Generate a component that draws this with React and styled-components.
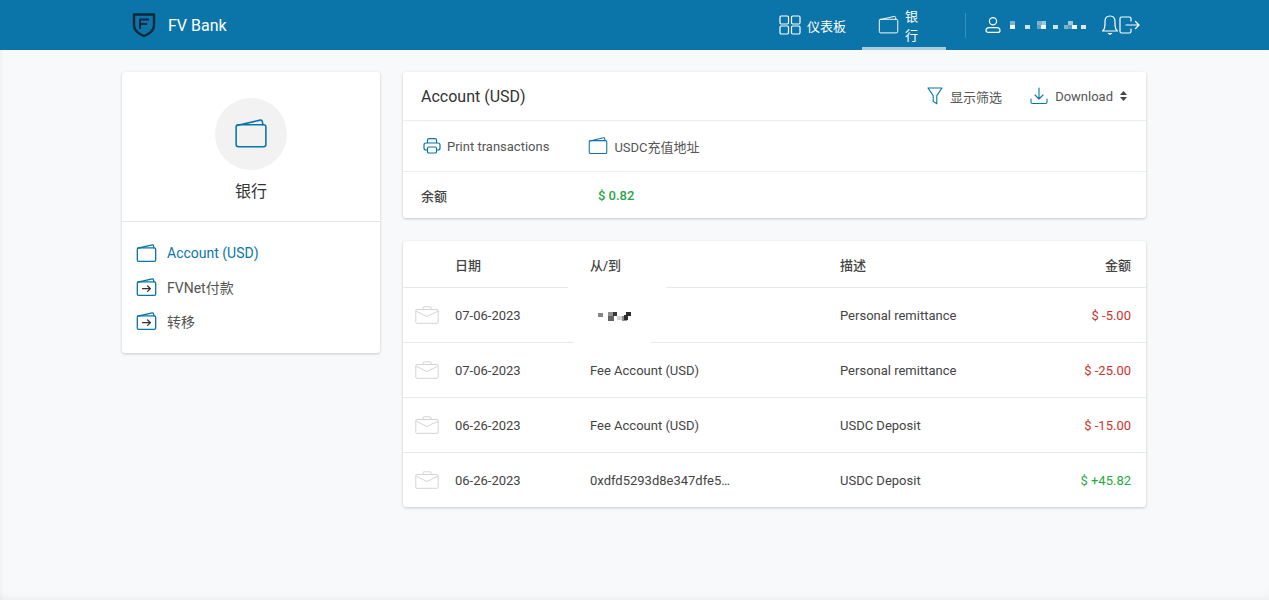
import React from "react";
import styled, { createGlobalStyle } from "styled-components";

const GlobalStyle = createGlobalStyle`
  html, body {
    margin: 0;
    padding: 0;
    height: 100%;
    background: #f8f9fa;
    font-family: Roboto, "Noto Sans CJK SC", sans-serif;
    color: #444;
  }
  * { box-sizing: border-box; }
`;

// icons
const WalletIcon = ({ size = 24, color = "#0b75a9", width = 1.4 }) => (
  <svg width={size} height={size} viewBox="0 0 24 24" fill="none" stroke={color} strokeWidth={width} strokeLinejoin="round" strokeLinecap="round">
    <rect x="1.5" y="5.5" width="21" height="15.5" rx="1.6" />
    <path d="M2 6 L18.5 2.2 Q19.8 2 20 3.2 L20.4 5.5" />
  </svg>
);

const WalletArrowIcon = ({ size = 21 }) => (
  <svg width={size} height={size} viewBox="0 0 24 24" fill="none" stroke="#0b75a9" strokeWidth="1.5" strokeLinejoin="round" strokeLinecap="round">
    <rect x="1.5" y="5.5" width="21" height="15.5" rx="1.6" />
    <path d="M2 6 L18.5 2.2 Q19.8 2 20 3.2 L20.4 5.5" />
    <path d="M7.5 13.3 H16.5 M13.3 10.2 L16.5 13.3 L13.3 16.4" stroke="#333" />
  </svg>
);

const LogoIcon = () => (
  <svg width="26" height="26" viewBox="0 0 26 26" fill="none" stroke="#10263a" strokeWidth="2.4" strokeLinejoin="round">
    <path d="M3 2.5 H23 V13 Q23 20 13 24 Q3 20 3 13 Z" />
    <path d="M9 17 V7.5 H18 M9 12 H16" strokeWidth="2" />
  </svg>
);

const DashboardIcon = () => (
  <svg width="22" height="20" viewBox="0 0 22 20" fill="none" stroke="#fff" strokeWidth="1.2">
    <rect x="1" y="1" width="8.5" height="8" rx="1.2" />
    <rect x="12.5" y="1" width="8.5" height="8" rx="1.2" />
    <rect x="1" y="11" width="8.5" height="8" rx="1.2" />
    <rect x="12.5" y="11" width="8.5" height="8" rx="1.2" />
  </svg>
);

const UserIcon = () => (
  <svg width="18" height="18" viewBox="0 0 18 18" fill="none" stroke="#fff" strokeWidth="1.2">
    <circle cx="9" cy="5.2" r="3.6" />
    <path d="M2 14.4 Q2 11.6 5.5 11.6 H12.5 Q16 11.6 16 14.4 Q16 16.4 13.5 16.4 H4.5 Q2 16.4 2 14.4 Z" />
  </svg>
);

const BellIcon = () => (
  <svg width="18" height="22" viewBox="0 0 18 22" fill="none" stroke="#fff" strokeWidth="1.2" strokeLinejoin="round">
    <path d="M1.5 17 Q4 15 4 10 V7.5 Q4 2 9 2 Q14 2 14 7.5 V10 Q14 15 16.5 17 Z" />
    <path d="M7 19 Q9 21.5 11 19" fill="#fff" />
  </svg>
);

const LogoutIcon = () => (
  <svg width="21" height="18" viewBox="0 0 21 18" fill="none" stroke="#fff" strokeWidth="1.2" strokeLinecap="round" strokeLinejoin="round">
    <path d="M12 5 V2.5 Q12 1 10.5 1 H2.5 Q1 1 1 2.5 V15.5 Q1 17 2.5 17 H10.5 Q12 17 12 15.5 V13" />
    <path d="M7 9 H20 M16.5 5.5 L20 9 L16.5 12.5" />
  </svg>
);

const PrinterIcon = () => (
  <svg width="18" height="18" viewBox="0 0 18 18" fill="none" stroke="#0b75a9" strokeWidth="1.2" strokeLinejoin="round">
    <path d="M4.5 6 V3 Q4.5 1.6 6 1.6 H12 Q13.5 1.6 13.5 3 V6" />
    <path d="M4.5 13 H3 Q1 13 1 11 V8 Q1 6 3 6 H15 Q17 6 17 8 V11 Q17 13 15 13 H13.5" />
    <rect x="4.5" y="10" width="9" height="6" rx="1.2" />
  </svg>
);

const FilterIcon = () => (
  <svg width="16" height="18" viewBox="0 0 16 18" fill="none" stroke="#0b75a9" strokeWidth="1.1" strokeLinejoin="round">
    <path d="M1 1 H15 L9.8 8.6 V16.8 L6.2 14.4 V8.6 Z" />
  </svg>
);

const DownloadIcon = () => (
  <svg width="18" height="18" viewBox="0 0 18 18" fill="none" stroke="#0b75a9" strokeWidth="1.1" strokeLinecap="round" strokeLinejoin="round">
    <path d="M9 1 V12 M5 8 L9 12 L13 8" />
    <path d="M1 12 V15 Q1 16.5 2.5 16.5 H15.5 Q17 16.5 17 15 V12" />
  </svg>
);

const SortIcon = () => (
  <svg width="7" height="10" viewBox="0 0 7 10" fill="#444">
    <path d="M3.5 0 L7 4 H0 Z M3.5 10 L0 6 H7 Z" />
  </svg>
);

const CaseIcon = () => (
  <svg width="24" height="18" viewBox="0 0 24 18" fill="none" stroke="#d4d4d4" strokeWidth="1">
    <rect x="0.8" y="3.5" width="22.4" height="13.8" rx="1" />
    <path d="M0.8 5 L12 10.5 L23.2 5 M8 3.5 V1.6 Q8 0.8 9 0.8 H15 Q16 0.8 16 1.6 V3.5" />
  </svg>
);

// pixelated patch of hidden text
const Pixels = ({ cells, w, h, color }) => (
  <svg width={w} height={h} viewBox={`0 0 ${w} ${h}`}>
    {cells.map(([x, y, cw, ch, o], i) => (
      <rect key={i} x={x} y={y} width={cw} height={ch} fill={color} opacity={o} />
    ))}
  </svg>
);

const headerPixels = [
  [0, 1, 5, 4, 0.45], [0, 5, 5, 4, 0.95], [15, 5, 5, 4, 0.8], [27, 1, 5, 4, 0.45], [32, 1, 4, 4, 0.6],
  [27, 5, 4, 4, 0.35], [31, 5, 5, 4, 0.95], [43, 5, 5, 4, 0.8], [54, 5, 4, 4, 0.45], [58, 1, 5, 4, 0.6],
  [62, 5, 5, 4, 0.95], [71, 5, 5, 4, 0.85], [58, 5, 4, 4, 0.3],
];

const rowPixels = [
  [0, 2, 5, 4, 0.55], [10, 1, 5, 4, 0.5], [15, 1, 4, 4, 0.9], [10, 5, 6, 5, 0.7], [19, 5, 5, 4, 0.2],
  [24, 5, 5, 5, 0.5], [28, 1, 5, 4, 0.95], [26, 4, 4, 5, 0.9],
];

const menuItems = [
  { label: "Account (USD)", active: true, icon: <WalletIcon size={21} width={1.5} /> },
  { label: "FVNet付款", icon: <WalletArrowIcon /> },
  { label: "转移", icon: <WalletArrowIcon /> },
];

const rows = [
  { date: "07-06-2023", party: null, desc: "Personal remittance", amount: "$ -5.00", plus: false },
  { date: "07-06-2023", party: "Fee Account (USD)", desc: "Personal remittance", amount: "$ -25.00", plus: false },
  { date: "06-26-2023", party: "Fee Account (USD)", desc: "USDC Deposit", amount: "$ -15.00", plus: false },
  { date: "06-26-2023", party: "0xdfd5293d8e347dfe5…", desc: "USDC Deposit", amount: "$ +45.82", plus: true },
];

export default function App() {
  return (
    <>
      <GlobalStyle />
      <Page>
        <TopBar>
          <Brand>
            <LogoIcon />
            <BrandName>FV Bank</BrandName>
          </Brand>
          <NavGroup>
            <NavItem>
              <DashboardIcon />
              <span>仪表板</span>
            </NavItem>
            <NavItem $active>
              <WalletIcon size={22} color="#fff" width={1.1} />
              <span>银行</span>
            </NavItem>
            <NavDivider />
            <UserBlock>
              <UserIcon />
              <Pixels cells={headerPixels} w={77} h={10} color="#fff" />
            </UserBlock>
            <BellIcon />
            <LogoutIcon />
          </NavGroup>
        </TopBar>

        <Content>
          <SideCard>
            <SideHead>
              <IconCircle>
                <WalletIcon size={34} width={1.1} />
              </IconCircle>
              <SideTitle>银行</SideTitle>
            </SideHead>
            <SideMenu>
              {menuItems.map((item) => (
                <MenuRow key={item.label} $active={item.active}>
                  {item.icon}
                  <span>{item.label}</span>
                </MenuRow>
              ))}
            </SideMenu>
          </SideCard>

          <MainCol>
            <Card>
              <TitleRow>
                <CardTitle>Account (USD)</CardTitle>
                <TitleActions>
                  <ActionItem>
                    <FilterIcon />
                    <span>显示筛选</span>
                  </ActionItem>
                  <ActionItem>
                    <DownloadIcon />
                    <span>Download</span>
                    <SortIcon />
                  </ActionItem>
                </TitleActions>
              </TitleRow>
              <ToolRow>
                <ToolItem>
                  <PrinterIcon />
                  <span>Print transactions</span>
                </ToolItem>
                <ToolItem>
                  <WalletIcon size={20} width={1.3} />
                  <span>USDC充值地址</span>
                </ToolItem>
              </ToolRow>
              <BalanceRow>
                <BalanceLabel>余额</BalanceLabel>
                <BalanceValue>$ 0.82</BalanceValue>
              </BalanceRow>
            </Card>

            <TableCard>
              <HeadRow>
                <span />
                <HeadCell>日期</HeadCell>
                <HeadCell>从/到</HeadCell>
                <HeadCell>描述</HeadCell>
                <HeadCell $right>金额</HeadCell>
              </HeadRow>
              {rows.map((row, i) => (
                <BodyRow key={i}>
                  <CaseIcon />
                  <span>{row.date}</span>
                  {row.party ? (
                    <span>{row.party}</span>
                  ) : (
                    <RedactedCell>
                      <Pixels cells={rowPixels} w={33} h={10} color="#222" />
                    </RedactedCell>
                  )}
                  <span>{row.desc}</span>
                  <Amount $plus={row.plus}>{row.amount}</Amount>
                </BodyRow>
              ))}
            </TableCard>
          </MainCol>
        </Content>
      </Page>
    </>
  );
}

const Page = styled.div`
  width: 100%;
  height: 600px;
  overflow: hidden;
  background: #f8f9fa;
  box-shadow: inset 0 -6px 8px -4px rgba(0, 0, 0, 0.05), inset 4px 0 5px -3px rgba(0, 0, 0, 0.04);
`;

const TopBar = styled.header`
  height: 50px;
  background: #0b75a9;
  display: flex;
  align-items: center;
  justify-content: space-between;
  padding: 0 129px 0 131px;
`;

const Brand = styled.div`
  display: flex;
  align-items: center;
  gap: 11px;
`;

const BrandName = styled.span`
  color: #fff;
  font-size: 16px;
`;

const NavGroup = styled.nav`
  height: 100%;
  display: flex;
  align-items: center;
`;

const NavItem = styled.div`
  height: 100%;
  display: flex;
  align-items: center;
  gap: 6px;
  color: #fff;
  font-size: 13px;
  padding: 0 16px 0 16px;
  border-bottom: 3px solid ${(p) => (p.$active ? "#a9cde0" : "transparent")};
  padding-top: 3px;
  width: ${(p) => (p.$active ? "84px" : "auto")};
`;

const NavDivider = styled.div`
  width: 1px;
  height: 25px;
  background: rgba(255, 255, 255, 0.2);
  margin: 0 18px 0 19px;
`;

const UserBlock = styled.div`
  display: flex;
  align-items: center;
  gap: 8px;
  margin-right: 14px;
`;

const Content = styled.main`
  display: flex;
  align-items: flex-start;
  gap: 23px;
  width: 1024px;
  margin: 22px 0 0 122px;
`;

const Card = styled.section`
  background: #fff;
  border-radius: 3px;
  box-shadow: 0 1px 3px rgba(0, 0, 0, 0.2);
`;

const SideCard = styled(Card)`
  width: 258px;
  flex-shrink: 0;
  height: 281px;
`;

const SideHead = styled.div`
  height: 150px;
  display: flex;
  flex-direction: column;
  align-items: center;
  padding-top: 26px;
  border-bottom: 1px solid #e3e5e8;
`;

const IconCircle = styled.div`
  width: 72px;
  height: 72px;
  border-radius: 50%;
  background: #f2f2f2;
  display: flex;
  align-items: center;
  justify-content: center;
`;

const SideTitle = styled.div`
  margin-top: 11px;
  font-size: 16px;
  line-height: 22px;
  color: #333;
`;

const SideMenu = styled.div`
  display: flex;
  flex-direction: column;
  gap: 10px;
  padding: 19px 0 0 14px;
`;

const MenuRow = styled.div`
  display: flex;
  align-items: center;
  gap: 10px;
  height: 24px;
  font-size: 14px;
  color: ${(p) => (p.$active ? "#0b75a9" : "#555")};
`;

const MainCol = styled.div`
  width: 743px;
  display: flex;
  flex-direction: column;
  gap: 23px;
`;

const TitleRow = styled.div`
  height: 49px;
  display: flex;
  align-items: center;
  justify-content: space-between;
  padding: 0 19px 0 18px;
  border-bottom: 1px solid #ebedef;
`;

const CardTitle = styled.h2`
  margin: 0;
  font-size: 16px;
  font-weight: 400;
  color: #333;
`;

const TitleActions = styled.div`
  display: flex;
  align-items: center;
  gap: 28px;
`;

const ActionItem = styled.div`
  display: flex;
  align-items: center;
  gap: 7px;
  font-size: 13px;
  color: #555;
`;

const ToolRow = styled.div`
  height: 51px;
  display: flex;
  align-items: center;
  gap: 39px;
  padding-left: 20px;
  border-bottom: 1px solid #ebedef;
`;

const ToolItem = styled.div`
  display: flex;
  align-items: center;
  gap: 6px;
  font-size: 13px;
  color: #555;
`;

const BalanceRow = styled.div`
  height: 46px;
  display: flex;
  align-items: center;
  padding-left: 18px;
  font-size: 13px;
`;

const BalanceLabel = styled.div`
  width: 177px;
  font-weight: 500;
  color: #444;
`;

const BalanceValue = styled.div`
  font-weight: 500;
  color: #28a745;
`;

const TableCard = styled(Card)`
  font-size: 13px;
  color: #444;
`;

const tableCols = "52px 135px 250px 1fr 120px";

const HeadRow = styled.div`
  height: 47px;
  display: grid;
  grid-template-columns: ${tableCols};
  align-items: center;
  padding-right: 15px;
  border-bottom: 1px solid #e6e8ea;
`;

const HeadCell = styled.div`
  font-weight: 500;
  color: #444;
  text-align: ${(p) => (p.$right ? "right" : "left")};
`;

const BodyRow = styled.div`
  height: 55px;
  display: grid;
  grid-template-columns: ${tableCols};
  align-items: center;
  padding-right: 15px;
  border-bottom: 1px solid #e6e8ea;

  &:last-child {
    height: 54px;
    border-bottom: none;
  }

  & > svg {
    margin-left: 12px;
  }
`;

const RedactedCell = styled.div`
  position: relative;
  height: 100%;
  display: flex;
  align-items: center;
  padding: 2px 0 0 8px;

  &::before {
    content: "";
    position: absolute;
    left: -22px;
    top: -1px;
    width: 98px;
    height: 3px;
    background: #fff;
  }

  &::after {
    content: "";
    position: absolute;
    left: -16px;
    bottom: -1px;
    width: 77px;
    height: 3px;
    background: #fff;
  }
`;

const Amount = styled.span`
  text-align: right;
  color: ${(p) => (p.$plus ? "#28a745" : "#d0312d")};
`;
